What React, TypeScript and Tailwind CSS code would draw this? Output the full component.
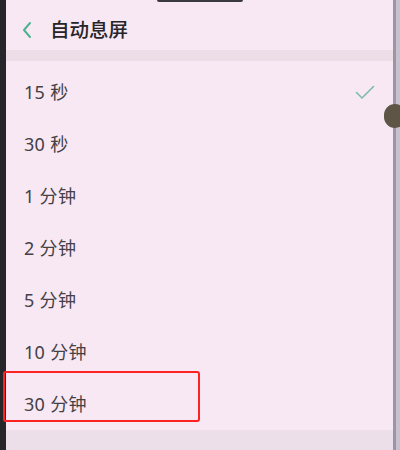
import React from "react";

const items = ["15 秒", "30 秒", "1 分钟", "2 分钟", "5 分钟", "10 分钟", "30 分钟"];

export default function App() {
  return (
    <div
      className="relative w-[400px] h-[450px] flex overflow-hidden bg-[#1e1e22]"
      style={{ fontFamily: '"Noto Sans", "Noto Sans CJK SC", sans-serif' }}
    >
      <div className="w-[6px] h-full bg-[#26262a]" />
      <div className="flex-1 h-full flex flex-col bg-[#f7e8f3]">
        <div className="h-[50px] flex items-center pl-[15px] pt-[10px]">
          <svg width="12" height="18" viewBox="0 0 12 18" className="mr-[17px]">
            <path d="M9 2 L3 9 L9 16" fill="none" stroke="#4db38f" strokeWidth="2" strokeLinecap="round" strokeLinejoin="round" />
          </svg>
          <span className="text-[19.5px] font-medium text-[#262428] leading-none">自动息屏</span>
        </div>
        <div className="h-[11px] bg-[#ecdde7]" />
        <div className="pt-[5px] flex flex-col">
          {items.map((t, i) => (
            <div key={t} className="h-[52px] flex items-center justify-between pl-[18px] pr-[18px]">
              <span className="text-[18px] text-[#444045] leading-none tracking-[0.3px]">{t}</span>
              {i === 0 && (
                <svg width="20" height="15" viewBox="0 0 20 15">
                  <path d="M1.5 7.5 L7 13 L18.5 1.5" fill="none" stroke="#7fbcab" strokeWidth="1.6" strokeLinecap="round" strokeLinejoin="round" />
                </svg>
              )}
            </div>
          ))}
        </div>
        <div className="flex-1 bg-[#eddfe9]" />
      </div>
      <div className="w-[7px] h-full flex">
        <div className="w-[3px] h-full bg-[#9a96a6]" />
        <div className="flex-1 h-full bg-[#c9c0d0]" />
      </div>
      <div className="absolute left-[157px] top-0 w-[86px] h-[2px] rounded-b-full bg-[#3a3a3e]" />
      <div className="absolute left-[384px] top-[104px] w-[22px] h-[24px] rounded-full bg-[#5e5546]" />
      <div className="absolute left-[3px] top-[371px] w-[197px] h-[51px] rounded-[3px] border-2 border-[#ff2222]" />
    </div>
  );
}
